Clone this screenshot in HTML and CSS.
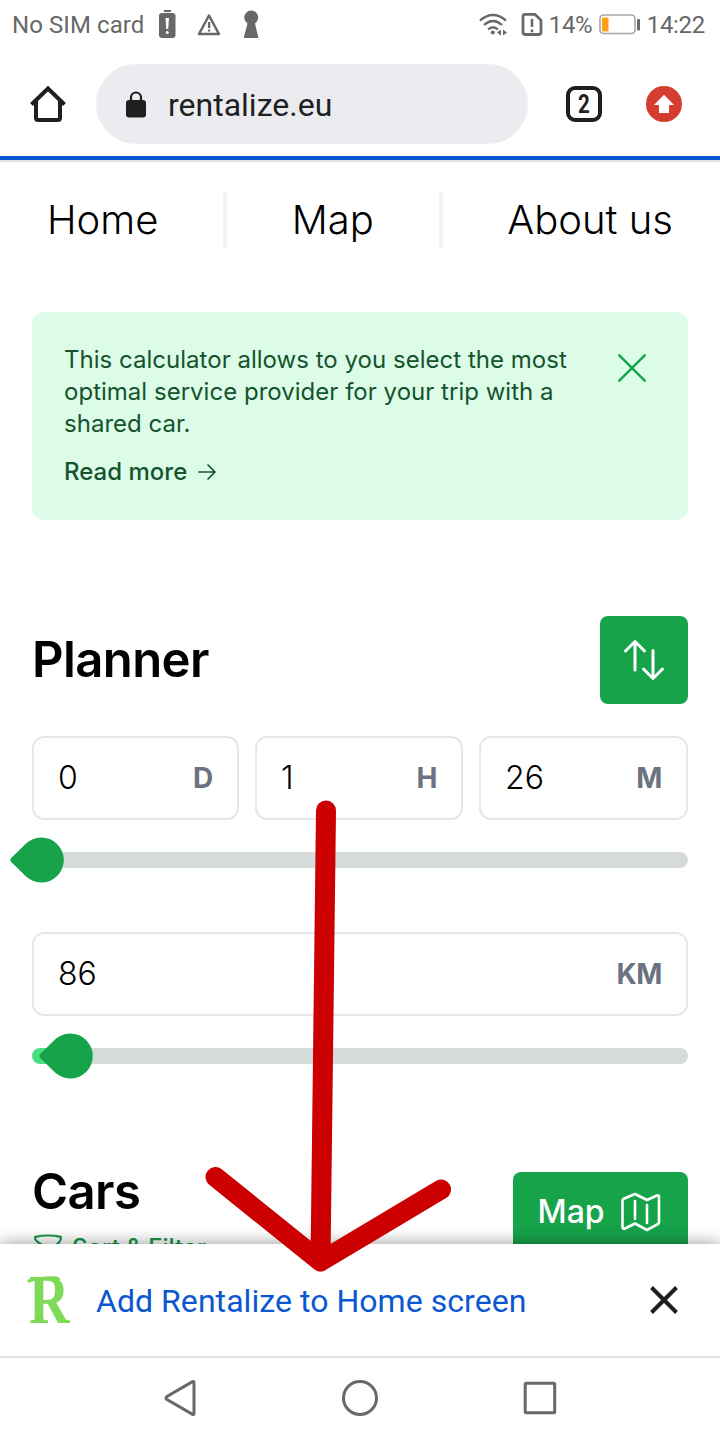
FILE: index.html
```html
<!DOCTYPE html>
<html lang="en">
<head>
<meta charset="utf-8">
<title>Rentalize</title>
<link rel="stylesheet" href="styles.css">
</head>
<body>
<div class="phone">
  <header class="status">
    <span class="sim">No SIM card</span>
    <svg class="notices" width="100" height="32" viewBox="0 0 100 32" fill="#686868">
      <path d="M5 2h7v2H5z"/><rect y="5" width="16.500" height="25" rx="3"/>
      <path d="M6.500 10h3.500l-.8 11H7.300z" fill="#fff"/><circle cx="8.250" cy="24.500" r="1.500" fill="#fff"/>
      <path d="M50 7.500 60 26H40z" fill="none" stroke="#686868" stroke-width="2.500" stroke-linejoin="round"/>
      <path d="M48.900 14h2.400v6h-2.400zm0 7.500h2.400v2h-2.400z"/>
      <path d="M88.500 15.500a7 7 0 1 1 7.500 0L99.500 30H84.700z"/>
    </svg>
    <svg class="signals" width="70" height="32" viewBox="0 0 70 32" fill="none" stroke="#686868" stroke-width="2.300">
      <path d="M1 12.500q13-11 26 0M5 17q9-8 18 0M9 21.500q5-4.500 10 0"/>
      <circle cx="13.800" cy="24.500" r="2" fill="#686868" stroke="none"/>
      <path d="M18 24.500l4-3v6zM24 21.500v6l4-3z" fill="#686868" stroke="none"/>
      <path d="M46 6.300h10l6 6V24q0 2.500-2.500 2.500h-13Q44 26.500 44 24V8.500q0-2.200 2-2.200z" stroke-width="2.800"/>
      <path d="M53 11v8M53 21.500v2.700" stroke-width="2.500"/>
    </svg>
    <span class="percent">14%</span>
    <svg class="battery" width="42" height="22" viewBox="0 0 42 22">
      <rect x="1" y="1" width="35" height="18.500" rx="3.500" fill="#fff" stroke="#a6a6a6" stroke-width="1.600"/>
      <rect x="3" y="3.500" width="6.500" height="14" rx="1" fill="#ff9f18"/>
      <rect x="38" y="5" width="3" height="11.500" rx="1" fill="#686868"/>
    </svg>
    <span class="clock">14:22</span>
  </header>

  <div class="toolbar">
    <svg class="home" width="36" height="36" viewBox="0 0 36 36" fill="none" stroke="#1f1f1f" stroke-width="4">
      <path d="M1.500 18.500 18 2.500l16.500 16"/><path d="M6 14v18q0 2 2 2h20q2 0 2-2V14"/>
    </svg>
    <div class="address">
      <svg width="20" height="27" viewBox="0 0 20 27"><rect y="9" width="20" height="17.500" rx="3" fill="#1f1f1f"/><path d="M5 10V6.500a5 5 0 0 1 10 0V10" fill="none" stroke="#1f1f1f" stroke-width="2.200"/></svg>
      <span>rentalize.eu</span>
    </div>
    <div class="tabs"><span>2</span></div>
    <svg class="update" width="36" height="36" viewBox="0 0 36 36"><circle cx="18" cy="18" r="18" fill="#d33e30"/><path d="M18 8.800 28 19h-5v8H13v-8H8z" fill="#fff"/></svg>
  </div>

  <main class="page">
    <nav class="menu">
      <a class="link-home">Home</a><i></i><a class="link-map">Map</a><i></i><a class="link-about">About us</a>
    </nav>
    <section class="notice">
      <div class="message">
        <p>This calculator allows to you select the most optimal service provider for your trip with a shared car.</p>
        <a>Read more
          <svg width="20" height="20" viewBox="0 0 20 20" fill="none" stroke="#14532d" stroke-width="1.700" stroke-linecap="round" stroke-linejoin="round"><path d="M2 10h16M11 3l7 7-7 7"/></svg>
        </a>
      </div>
      <svg class="dismiss" width="28" height="28" viewBox="0 0 28 28" stroke="#16a34a" stroke-width="2.500" stroke-linecap="round"><path d="m1.300 1.300 25.400 25.400m0-25.400L1.300 26.700"/></svg>
    </section>

    <section class="planner">
      <div class="heading">
        <h2>Planner</h2>
        <button class="swap">
          <svg width="48" height="48" viewBox="0 0 48 48" fill="none" stroke="#fff" stroke-width="3" stroke-linecap="round" stroke-linejoin="round"><path d="M15 34V5.500M5.500 15 15 5.500l9.500 9.500M33 14.500v28M23.500 33l9.500 9.500 9.500-9.500"/></svg>
        </button>
      </div>
      <div class="fields">
        <div class="field"><span>0</span><b>D</b></div>
        <div class="field"><span>1</span><b>H</b></div>
        <div class="field"><span>26</span><b>M</b></div>
      </div>
      <div class="slider slider-time"><svg class="thumb" width="54" height="46" viewBox="0 0 54 46"><path d="M15 7.500a22.500 22.500 0 1 1 0 31L1.200 25Q-.6 23 1.200 21z" fill="#16a34a"/></svg></div>
      <div class="field distance"><span>86</span><b>KM</b></div>
      <div class="slider slider-distance"><svg class="thumb" width="54" height="46" viewBox="0 0 54 46"><path d="M15 7.500a22.500 22.500 0 1 1 0 31L1.200 25Q-.6 23 1.200 21z" fill="#16a34a"/></svg></div>
    </section>

    <section class="cars">
      <div class="titles">
        <h2>Cars</h2>
        <a class="filter">
          <svg width="28" height="28" viewBox="0 0 28 28" fill="none" stroke="#15974a" stroke-width="2.200" stroke-linejoin="round"><path d="M1.200 2.800q12.800-2.600 25.600 0v2q0 3-7.800 9v10l-6 3V13.500q-11.800-6-11.800-9z"/></svg>
          Sort &amp; Filter
        </a>
      </div>
      <button class="map">Map
        <svg width="40" height="40" viewBox="0 0 40 40" fill="none" stroke="#fff" stroke-width="2.600" stroke-linecap="round" stroke-linejoin="round"><path d="M1.500 9q0-1.500 1.200-2.200L14 2l12 6 10-4.500q2-.8 2 1.500v25q0 1.500-1.200 2.200L26 38l-12-6.500L4 36.500q-2.500.8-2.500-1.500zM14 9v18M26 13v18"/></svg>
      </button>
    </section>
  </main>

  <div class="install">
    <svg class="logo" width="44" height="50" viewBox="0 0 44 50" fill="#7ed957">
      <text class="initial" transform="translate(3 48) scale(.8 1)">R</text>
      <path d="M1 5Q14 .5 31 1.500q3 1 4 3.500Q16 2 2.500 8z"/>
    </svg>
    <span>Add Rentalize to Home screen</span>
    <svg class="close" width="28" height="28" viewBox="0 0 28 28" stroke="#1f1f1f" stroke-width="4"><path d="m1.500 1.500 25 25m0-25-25 25"/></svg>
  </div>

  <footer class="system">
    <svg width="36" height="38" viewBox="0 0 36 38"><path d="M32 3.500v31q0 1.500-1.500.8L5 20.500q-2-1.500 0-3L30.500 2.700Q32 2 32 3.500z"/></svg>
    <svg width="36" height="38" viewBox="0 0 36 38"><circle cx="18" cy="19" r="16.500"/></svg>
    <svg width="36" height="38" viewBox="0 0 36 38"><rect x="3.200" y="4.200" width="29.500" height="29.500" rx="1"/></svg>
  </footer>

  <svg class="pointer" width="720" height="1440" viewBox="0 0 720 1440" fill="none" stroke="#cc0000" stroke-width="20" stroke-linecap="round" stroke-linejoin="round"><path d="M326 810.500 320.500 1261.500M215.500 1177 320.500 1261.500l120.500-72"/></svg>
</div>
</body>
</html>
```

FILE: styles.css
```css
* { box-sizing: border-box; }
body { margin: 0; background: #fff; }
h2, p { margin: 0; }
svg { display: block; flex: none; }
button { border: 0; padding: 0; margin: 0; background: #16a34a; color: #fff; font-family: inherit; }

.phone { position: relative; width: 720px; height: 1440px; overflow: hidden; display: flex; flex-direction: column; font-family: Inter, sans-serif; color: #000; }

.status { height: 48px; flex: none; display: flex; align-items: center; padding: 2px 15px 0 12px; font: 24px/46px Roboto, sans-serif; color: #686868; white-space: nowrap; }
.sim { width: 146px; letter-spacing: .08px; }
.notices { margin-top: -2px; margin-left: 1px; }
.signals { margin-left: 220px; margin-top: -2px; }
.percent { width: 50px; letter-spacing: -.4px; }
.battery { margin-top: -1px; }
.clock { margin-left: 6px; letter-spacing: -.3px; }

.toolbar { height: 114px; flex: none; display: flex; align-items: center; padding: 0 38px 0 30px; border-bottom: 2px solid #e2e3e6; box-shadow: inset 0 -4px #0b57d0; }
.address { width: 432px; height: 80px; margin-left: 30px; padding-left: 30px; border-radius: 40px; background: #ebecf0; display: flex; align-items: center; gap: 22px; font: 32px/40px Roboto, sans-serif; color: #1f1f1f; }
.address span { padding-top: 1px; }
.tabs { width: 36px; height: 36px; margin-left: 38px; border: 4px solid #1f1f1f; border-radius: 9px; font: bold 25px/30px Roboto, sans-serif; text-align: center; color: #1f1f1f; }
.tabs span { display: block; transform: scaleX(.82); }
.tabs, .home, .update, .address { flex: none; }
.update { margin-left: 44px; }

.page { height: 1082px; flex: none; padding: 30px 32px 0; overflow: hidden; }
.menu { height: 56px; display: flex; align-items: center; justify-content: space-between; font-size: 40px; font-weight: 350; line-height: 56px; padding: 0 15px; white-space: nowrap; }
.menu i { width: 4px; height: 56px; background: #f1f5f9; }

.notice { height: 208px; margin-top: 64px; padding: 32px 42px 0 32px; display: flex; justify-content: space-between; border-radius: 12px; background: #dcfce7; color: #14532d; font-size: 24px; line-height: 32px; letter-spacing: .02px; }
.message { width: 520px; }
.message a { display: flex; align-items: center; gap: 10px; margin-top: 16px; font-weight: 500; }
.dismiss { margin-top: 10px; }

.heading { height: 88px; margin-top: 96px; display: flex; align-items: center; justify-content: space-between; }
h2 { font-size: 49px; line-height: 56px; font-weight: 600; letter-spacing: -.6px; }
.swap { width: 88px; height: 88px; border-radius: 8px; display: flex; align-items: center; justify-content: center; }
.fields { margin-top: 32px; display: grid; grid-template-columns: 207px 208px 209px; gap: 16px; }
.field { height: 84px; padding: 0 24px 2px; display: flex; align-items: center; justify-content: space-between; border: 2px solid #e5e7eb; border-radius: 12px; font-size: 32px; font-weight: 350; }
.field b { color: #6b7280; font-size: 28px; font-weight: 700; padding-top: 1px; letter-spacing: -.3px; }
.slider { position: relative; height: 16px; margin-top: 32px; border-radius: 8px; background: #d5dada; }
.thumb { position: absolute; left: -22px; top: -15px; }
.distance { margin-top: 64px; }
.slider-distance { background: linear-gradient(to right, #4ade80 38px, #d5dada 38px); }
.slider-distance .thumb { left: 7px; }

.cars { height: 72px; margin-top: 108px; display: flex; justify-content: space-between; align-items: flex-start; }
.titles { margin-top: -8px; }
.filter { display: flex; align-items: center; gap: 10px; margin-top: 12px; padding-left: 2px; font-size: 24px; font-weight: 500; line-height: 32px; color: #15974a; }
.map { width: 175px; height: 80px; padding: 0 3px 2px 0; border-radius: 8px; display: flex; align-items: center; justify-content: center; gap: 16px; font-size: 32px; font-weight: 500; }
.map svg { margin-top: 2px; }

.install { position: relative; height: 112px; flex: none; display: flex; align-items: center; padding: 0 42px 0 26px; background: #fff; box-shadow: 0 0 16px rgba(0, 0, 0, .42); font: 32px/40px Roboto, sans-serif; letter-spacing: .05px; color: #0b57d0; }
.install span { margin-left: 26px; flex: 1; padding-top: 2px; }
.logo { overflow: visible; }
.initial { font: bold 70px "Liberation Serif", serif; }

.system { position: relative; height: 84px; flex: none; display: flex; justify-content: center; gap: 144px; padding-top: 21px; border-top: 2px solid #e1e1e1; background: #fff; }
.system svg { fill: none; stroke: #686868; stroke-width: 3; }
.pointer { position: absolute; left: 0; top: 0; pointer-events: none; }
```
